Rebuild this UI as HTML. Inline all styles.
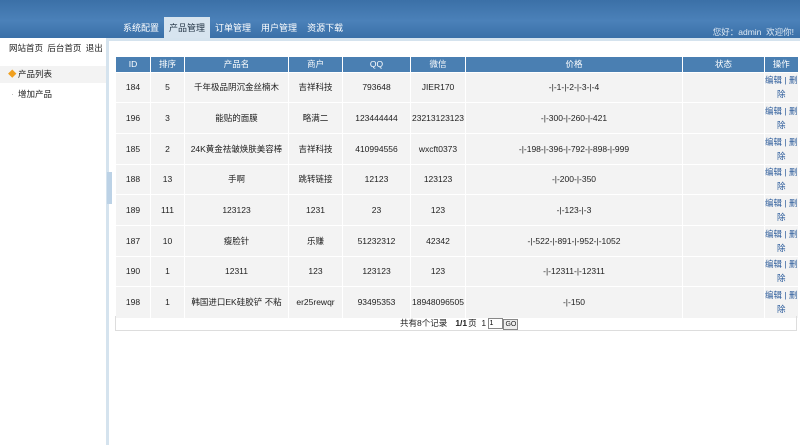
<!DOCTYPE html>
<html><head><meta charset="utf-8"><style>
*{margin:0;padding:0;box-sizing:border-box}
body{width:800px;height:445px;overflow:hidden;background:#fff;font-family:"Liberation Sans","Noto Sans CJK SC",sans-serif;font-size:8.5px;color:#222;position:relative}
.hd{position:absolute;left:0;top:0;width:800px;height:38px;background:linear-gradient(#3b70a7,#4b81b9 55%,#3a70a8)}
.nav{position:absolute;top:17px;left:118px;display:flex}
.nav span{color:#fff;font-size:9px;padding:4px 5px 0;height:21px}
.nav span.on{background:#d7e4ef;color:#234;}
.user{position:absolute;right:6px;top:26px;color:#dfe9f3;font-size:8.5px}
.side{position:absolute;left:0;top:38px;width:106px;height:407px;background:#fff}
.it{position:absolute;left:0;width:106px;height:17px;padding-left:18px;font-size:8.5px;line-height:17px}
.bar{position:absolute;left:106px;top:38px;width:3px;height:407px;background:#d5e3ee}
.bar2{position:absolute;left:109px;top:38px;width:691px;height:3px;background:#d5e3ee}
.tog{position:absolute;left:107px;top:172px;width:5px;height:32px;background:#bcd2e6}
table{position:absolute;left:115px;top:57px;width:682px;border-collapse:collapse;table-layout:fixed}
th{background:#4a7fb2;color:#fff;font-weight:normal;height:15px;border-left:1px solid #fff;font-size:8.5px}
td{background:#f3f3f3;height:30.7px;text-align:center;border-left:1px solid #fff;border-top:1px solid #fff;font-size:8.5px}
td.op{color:#2a5a9a;line-height:14px}
.pg{position:absolute;left:115px;top:316px;width:682px;height:15px;border:1px solid #ddd;border-top:none;font-size:8.5px;line-height:14px}
.pg .t{position:absolute;left:284px;top:0}
.pg input{width:15px;height:11px;border:1px solid #888;font-size:7px;vertical-align:middle}
.pg b{display:inline-block;border:1px solid #888;font-size:7px;line-height:9px;padding:0 1px;font-weight:normal;background:#eee}
</style></head><body>
<div class="hd"><div class="nav"><span>系统配置</span><span class="on">产品管理</span><span>订单管理</span><span>用户管理</span><span>资源下载</span></div><div class="user">您好：admin &nbsp;欢迎你!</div></div>
<div class="side">
<div style="left:9px;top:4px;position:absolute;font-size:8.5px;word-spacing:2px">网站首页 后台首页 退出</div>
<div class="it" style="top:28px;background:#f3f3f3"><span style="color:#f0a020;position:absolute;left:8px">◆</span>产品列表</div>
<div class="it" style="top:48px"><span style="color:#aaa;position:absolute;left:11px">·</span>增加产品</div>
</div>
<div class="bar"></div><div class="bar2"></div><div class="tog"></div>
<table>
<colgroup><col style="width:35px"><col style="width:34px"><col style="width:104px"><col style="width:54px"><col style="width:68px"><col style="width:55px"><col style="width:217px"><col style="width:82px"><col style="width:33px"></colgroup>
<tr><th>ID</th><th>排序</th><th>产品名</th><th>商户</th><th>QQ</th><th>微信</th><th>价格</th><th>状态</th><th>操作</th></tr>
<tr><td>184</td><td>5</td><td>千年极品阴沉金丝楠木</td><td>吉祥科技</td><td>793648</td><td>JIER170</td><td>-|-1-|-2-|-3-|-4</td><td></td><td class="op">编辑 | 删除</td></tr>
<tr><td>196</td><td>3</td><td>能贴的面膜</td><td>略满二</td><td>123444444</td><td>23213123123</td><td>-|-300-|-260-|-421</td><td></td><td class="op">编辑 | 删除</td></tr>
<tr><td>185</td><td>2</td><td>24K黄金祛皱焕肤美容棒</td><td>吉祥科技</td><td>410994556</td><td>wxcft0373</td><td>-|-198-|-396-|-792-|-898-|-999</td><td></td><td class="op">编辑 | 删除</td></tr>
<tr><td>188</td><td>13</td><td>手啊</td><td>跳转链接</td><td>12123</td><td>123123</td><td>-|-200-|-350</td><td></td><td class="op">编辑 | 删除</td></tr>
<tr><td>189</td><td>111</td><td>123123</td><td>1231</td><td>23</td><td>123</td><td>-|-123-|-3</td><td></td><td class="op">编辑 | 删除</td></tr>
<tr><td>187</td><td>10</td><td>瘦脸针</td><td>乐赚</td><td>51232312</td><td>42342</td><td>-|-522-|-891-|-952-|-1052</td><td></td><td class="op">编辑 | 删除</td></tr>
<tr><td>190</td><td>1</td><td>12311</td><td>123</td><td>123123</td><td>123</td><td>-|-12311-|-12311</td><td></td><td class="op">编辑 | 删除</td></tr>
<tr><td>198</td><td>1</td><td>韩国进口EK硅胶铲 不粘</td><td>er25rewqr</td><td>93495353</td><td>18948096505</td><td>-|-150</td><td></td><td class="op">编辑 | 删除</td></tr>
</table>
<div class="pg"><span class="t">共有8个记录 &nbsp; <b style="border:none;background:none;font-weight:bold;font-size:8.5px">1/1</b>页 &nbsp;1 <input value="1"><b>GO</b></span></div>
</body></html>
